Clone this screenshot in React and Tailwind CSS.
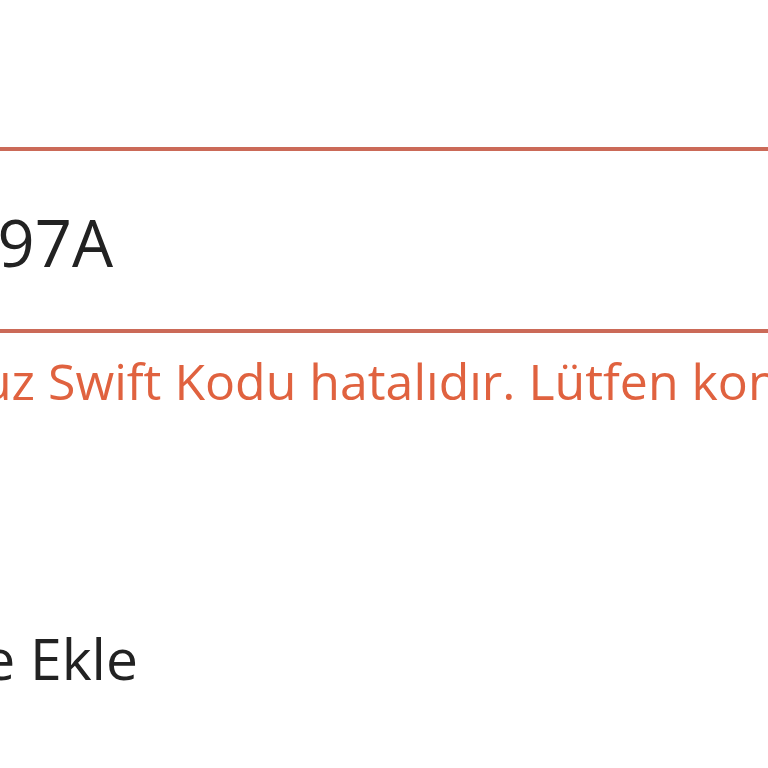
import React from 'react';

const font = { fontFamily: '"Open Sans", "Noto Sans", sans-serif' };

const App = () => {
  return (
    <div className="w-[768px] h-[768px] overflow-hidden bg-white" style={font}>
      <div className="pt-[147px]">
        <div className="h-[186px] border-y-4 border-[#cb6a58] flex items-center">
          <div className="w-[113px] shrink-0 flex justify-end pt-[4px] whitespace-nowrap text-[65px] leading-none text-[#222222]">
            TGBATRIS97A
          </div>
        </div>
        <div className="mt-[18px] flex whitespace-nowrap text-[50px] leading-[60px] text-[#e0623f]">
          <div className="w-[48px] shrink-0 flex justify-end">Girmiş olduğunuz&nbsp;</div>
          <div className="shrink-0">Swift Kodu hatalıdır. Lütfen kontrol ediniz.</div>
        </div>
        <div className="mt-[212px] flex whitespace-nowrap text-[57px] leading-[70px] text-[#222222]">
          <div className="w-[138px] shrink-0 flex justify-end">Favorilere Ekle</div>
        </div>
      </div>
    </div>
  );
};

export default App;
